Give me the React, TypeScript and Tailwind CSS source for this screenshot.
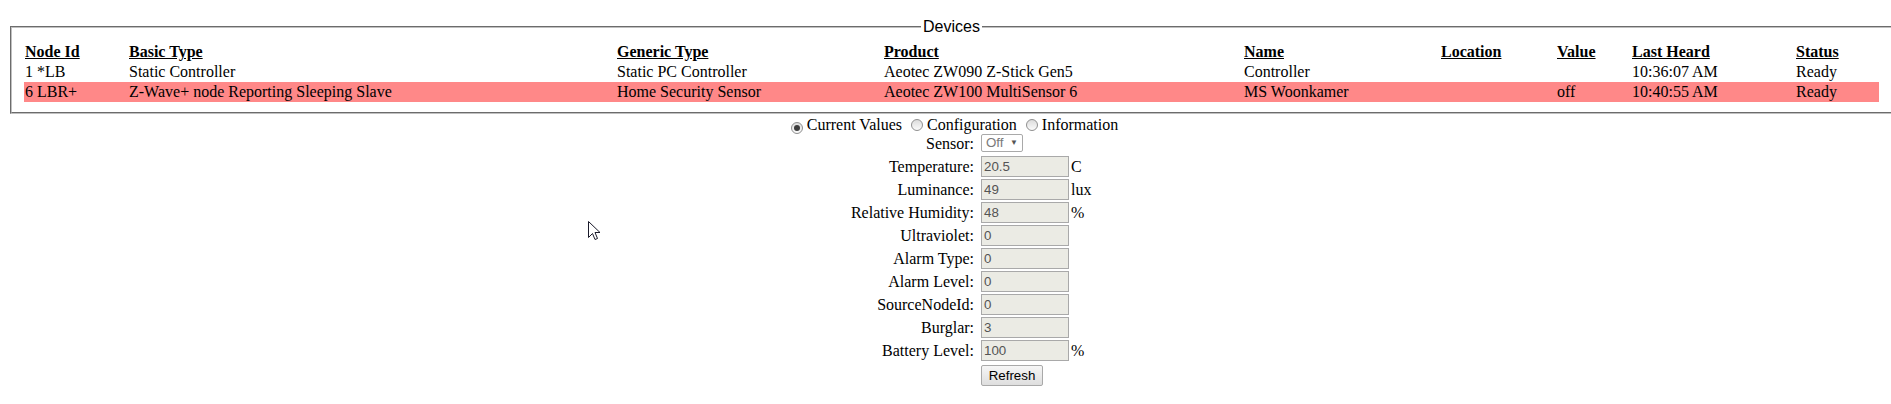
import React from "react";

const columns = [
  { key: "node", label: "Node Id" },
  { key: "basic", label: "Basic Type" },
  { key: "generic", label: "Generic Type" },
  { key: "product", label: "Product" },
  { key: "name", label: "Name" },
  { key: "location", label: "Location" },
  { key: "value", label: "Value" },
  { key: "heard", label: "Last Heard" },
  { key: "status", label: "Status" },
];

const devices = [
  {
    node: "1 *LB",
    basic: "Static Controller",
    generic: "Static PC Controller",
    product: "Aeotec ZW090 Z-Stick Gen5",
    name: "Controller",
    location: "",
    value: "",
    heard: "10:36:07 AM",
    status: "Ready",
    selected: false,
  },
  {
    node: "6 LBR+",
    basic: "Z-Wave+ node Reporting Sleeping Slave",
    generic: "Home Security Sensor",
    product: "Aeotec ZW100 MultiSensor 6",
    name: "MS Woonkamer",
    location: "",
    value: "off",
    heard: "10:40:55 AM",
    status: "Ready",
    selected: true,
  },
];

const values = [
  { label: "Temperature:", value: "20.5", unit: "C" },
  { label: "Luminance:", value: "49", unit: "lux" },
  { label: "Relative Humidity:", value: "48", unit: "%" },
  { label: "Ultraviolet:", value: "0", unit: "" },
  { label: "Alarm Type:", value: "0", unit: "" },
  { label: "Alarm Level:", value: "0", unit: "" },
  { label: "SourceNodeId:", value: "0", unit: "" },
  { label: "Burglar:", value: "3", unit: "" },
  { label: "Battery Level:", value: "100", unit: "%" },
];

const gridCols =
  "grid grid-cols-[104px_488px_267px_360px_197px_116px_75px_164px_84px]";

function Radio({ checked }: { checked?: boolean }) {
  return (
    <span className="inline-flex items-center justify-center w-[12px] h-[12px] ml-[5px] mr-[4px] rounded-full border border-[#8f8f8f] bg-gradient-to-b from-[#dcdcdc] to-[#fbfbfb] align-[-1px]">
      {checked && <span className="w-[6px] h-[6px] rounded-full bg-[#3c3c3c]" />}
    </span>
  );
}

export default function App() {
  return (
    <div className="relative w-full h-[404px] overflow-hidden bg-white text-black font-['Liberation_Serif',serif] text-[16px]">
      <div className="pt-[18px]">
        <fieldset className="ml-[10px] w-[1883px] border-2 [border-style:groove] border-[#c0c0c0] px-[12px] pt-[5.6px] pb-[10px]">
          <legend className="mx-auto px-[2px] font-['Liberation_Sans',sans-serif] text-[16px] leading-[18px]">
            Devices
          </legend>
          <div>
            <div className={`${gridCols} h-[20px] items-center`}>
              {columns.map((c) => (
                <div key={c.key} className="pl-[1px] font-bold underline leading-[20px]">
                  {c.label}
                </div>
              ))}
            </div>
            {devices.map((d) => (
              <div
                key={d.node}
                className={`${gridCols} h-[20px] items-center ${d.selected ? "bg-[#ff8888]" : ""}`}
              >
                {columns.map((c) => (
                  <div key={c.key} className="pl-[1px] leading-[20px] whitespace-nowrap">
                    {(d as Record<string, string | boolean>)[c.key] as string}
                  </div>
                ))}
              </div>
            ))}
          </div>
        </fieldset>
      </div>

      <div className="mt-[3px] h-[16px] flex justify-center items-center pl-[13px] leading-[18px]">
        <span className="whitespace-nowrap">
          <Radio checked />
          Current Values <Radio />
          Configuration <Radio />
          Information
        </span>
      </div>

      <div className="flex justify-center">
        <div className="grid grid-cols-[201px_88px_42px] gap-y-[2px]">
          <div className="h-[21px] pr-[7px] text-right leading-[21px]">Sensor:</div>
          <div className="h-[21px] flex items-center">
            <div className="w-[42px] h-[18px] flex items-center justify-between px-[4px] border border-[#a9a9a9] rounded-[2px] bg-white font-['Liberation_Sans',sans-serif] text-[13.33px] text-[#7a7a7a]">
              <span>Off</span>
              <span className="text-[8px] text-[#555]">▼</span>
            </div>
          </div>
          <div />
          {values.map((v) => (
            <React.Fragment key={v.label}>
              <div className="h-[21px] pr-[7px] text-right leading-[21px] whitespace-nowrap">
                {v.label}
              </div>
              <div className="h-[21px] w-[88px] border border-[#a9a9a9] bg-[#ebebe4] pl-[2px] font-['Liberation_Sans',sans-serif] text-[13.33px] leading-[19px] text-[#545454]">
                {v.value}
              </div>
              <div className="h-[21px] pl-[2px] leading-[21px]">{v.unit}</div>
            </React.Fragment>
          ))}
          <div />
          <div className="h-[21px]">
            <button className="w-[62px] h-[21px] border border-[#a9a9a9] rounded-[2px] bg-gradient-to-b from-[#f6f6f6] to-[#dedede] font-['Liberation_Sans',sans-serif] text-[13.33px] leading-[19px] text-black">
              Refresh
            </button>
          </div>
          <div />
        </div>
      </div>

      <svg
        className="absolute left-[588px] top-[221px]"
        width="13"
        height="20"
        viewBox="0 0 13 20"
      >
        <path
          d="M0.5 0.5 L0.5 16.5 L4.5 12.5 L7 18.5 L9.5 17.5 L7 11.5 L12 11.5 Z"
          fill="#fff"
          stroke="#1a1a2a"
          strokeWidth="1"
        />
      </svg>
    </div>
  );
}
